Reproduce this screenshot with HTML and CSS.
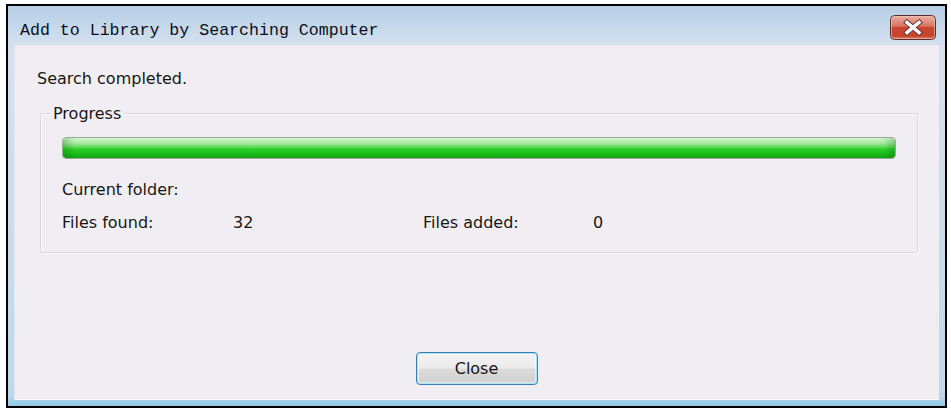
FILE: index.html
```html
<!DOCTYPE html>
<html lang="en">
<head>
<meta charset="utf-8">
<title>Add to Library by Searching Computer</title>
<link rel="stylesheet" href="styles.css">
</head>
<body>
<div class="window">
  <div class="titlebar">
    <span class="title">Add to Library by Searching Computer</span>
    <button class="close-x" aria-label="Close">
      <svg width="46" height="25" viewBox="0 0 46 25">
        <defs>
          <linearGradient id="rg" x1="0" y1="0" x2="0" y2="1">
            <stop offset="0" stop-color="#eab2a6"/>
            <stop offset="0.45" stop-color="#d9735f"/>
            <stop offset="0.5" stop-color="#c9472f"/>
            <stop offset="0.85" stop-color="#c5452c"/>
            <stop offset="1" stop-color="#e08a6f"/>
          </linearGradient>
        </defs>
        <rect x="0.5" y="0.5" width="45" height="24" rx="4" fill="url(#rg)" stroke="#5e2a2a"/>
        <rect x="1.5" y="1.5" width="43" height="22" rx="3" fill="none" stroke="#f3c9bd" stroke-opacity="0.6"/>
        <path d="M17 7.5 L29 17.5 M29 7.5 L17 17.5" stroke="#6b3030" stroke-width="5.5" stroke-linecap="square"/>
        <path d="M17 7.5 L29 17.5 M29 7.5 L17 17.5" stroke="#ffffff" stroke-width="3.5" stroke-linecap="square"/>
      </svg>
    </button>
  </div>
  <div class="client">
    <div class="status">Search completed.</div>
    <div class="group">
      <div class="group-title">Progress</div>
      <div class="progress"><div class="progress-fill"></div></div>
      <div class="row folder">Current folder:</div>
      <div class="row stats">
        <span>Files found:</span><span>32</span>
        <span>Files added:</span><span>0</span>
      </div>
    </div>
    <div class="actions"><button class="btn">Close</button></div>
  </div>
</div>
</body>
</html>
```
FILE: styles.css
```css
html, body {
  margin: 0;
  padding: 0;
  background: #ffffff;
}

body {
  font-family: "DejaVu Sans", Verdana, sans-serif;
  font-size: 16px;
  color: #161616;
}

.window {
  box-sizing: border-box;
  width: 941px;
  height: 404px;
  margin: 4px 0 0 6px;
  border: 2px solid #000;
  background: linear-gradient(to bottom, #b8cee6 0px, #d3e1ef 39px, #d6e2ee 45px, #cddcea 200px, #bcd9ec 390px, #93cde8 398px);
  display: flex;
  flex-direction: column;
}

.titlebar {
  height: 39px;
  flex: none;
  display: flex;
  align-items: flex-start;
  justify-content: space-between;
}

.title {
  font-family: "Liberation Mono", "DejaVu Sans Mono", monospace;
  font-size: 16.6px;
  line-height: 20px;
  color: #0a0f1c;
  margin: 15px 0 0 12px;
}

.close-x {
  margin: 9px 9px 0 0;
  padding: 0;
  border: 0;
  background: none;
  width: 46px;
  height: 25px;
  display: block;
}

.close-x svg {
  display: block;
}

.client {
  flex: 1;
  margin: 0 6px 6px 6px;
  background: #f1eef3;
  display: flex;
  flex-direction: column;
  box-shadow: inset 1px 0 0 #e2e6ee, inset 0 -1px 0 #fbfbfd;
}

.status {
  line-height: 19px;
  padding: 24px 0 0 23px;
}

.group {
  margin: 25px 21px 0 26px;
  padding: 0 21px 20px 21px;
  border: 1px solid #d9d6dd;
  box-shadow: inset 1px 1px 0 #fbfafc, 1px 1px 0 #fbfafc;
  border-radius: 2px;
}

.group-title {
  display: table;
  line-height: 19px;
  margin: -10px 0 0 -11px;
  padding: 0 2px;
  background: #f1eef3;
}

.progress {
  margin-top: 14px;
  height: 22px;
  box-sizing: border-box;
  border: 1px solid #9aa79a;
  border-radius: 4px;
  background: #e6e6e6;
  overflow: hidden;
}

.progress-fill {
  height: 100%;
  border-radius: 3px;
  background:
    linear-gradient(to right, rgba(0,90,0,0.25), rgba(0,0,0,0) 12px, rgba(0,0,0,0) calc(100% - 12px), rgba(0,90,0,0.25)),
    linear-gradient(to bottom, #d4f5cf 0%, #a9eaa2 25%, #63dc5c 45%, #2ccf2a 55%, #1cc01c 75%, #14a414 100%);
}

.row {
  line-height: 19px;
}

.folder {
  margin-top: 21px;
}

.stats {
  margin-top: 14px;
  display: grid;
  grid-template-columns: 171px 190px 170px auto;
}

.actions {
  margin-top: auto;
  margin-bottom: 15px;
  display: flex;
  justify-content: center;
}

.btn {
  width: 122px;
  height: 33px;
  padding: 0;
  font-family: "DejaVu Sans", Verdana, sans-serif;
  font-size: 16px;
  color: #161616;
  border: 1px solid #3a7fb0;
  border-radius: 4px;
  background: linear-gradient(to bottom, #f4f4f4 0%, #ebebeb 48%, #dcdcdc 52%, #cfcfcf 100%);
  box-shadow: inset 0 0 0 1px #a8e4f6, inset 0 0 0 2px rgba(255,255,255,0.5);
}
```
